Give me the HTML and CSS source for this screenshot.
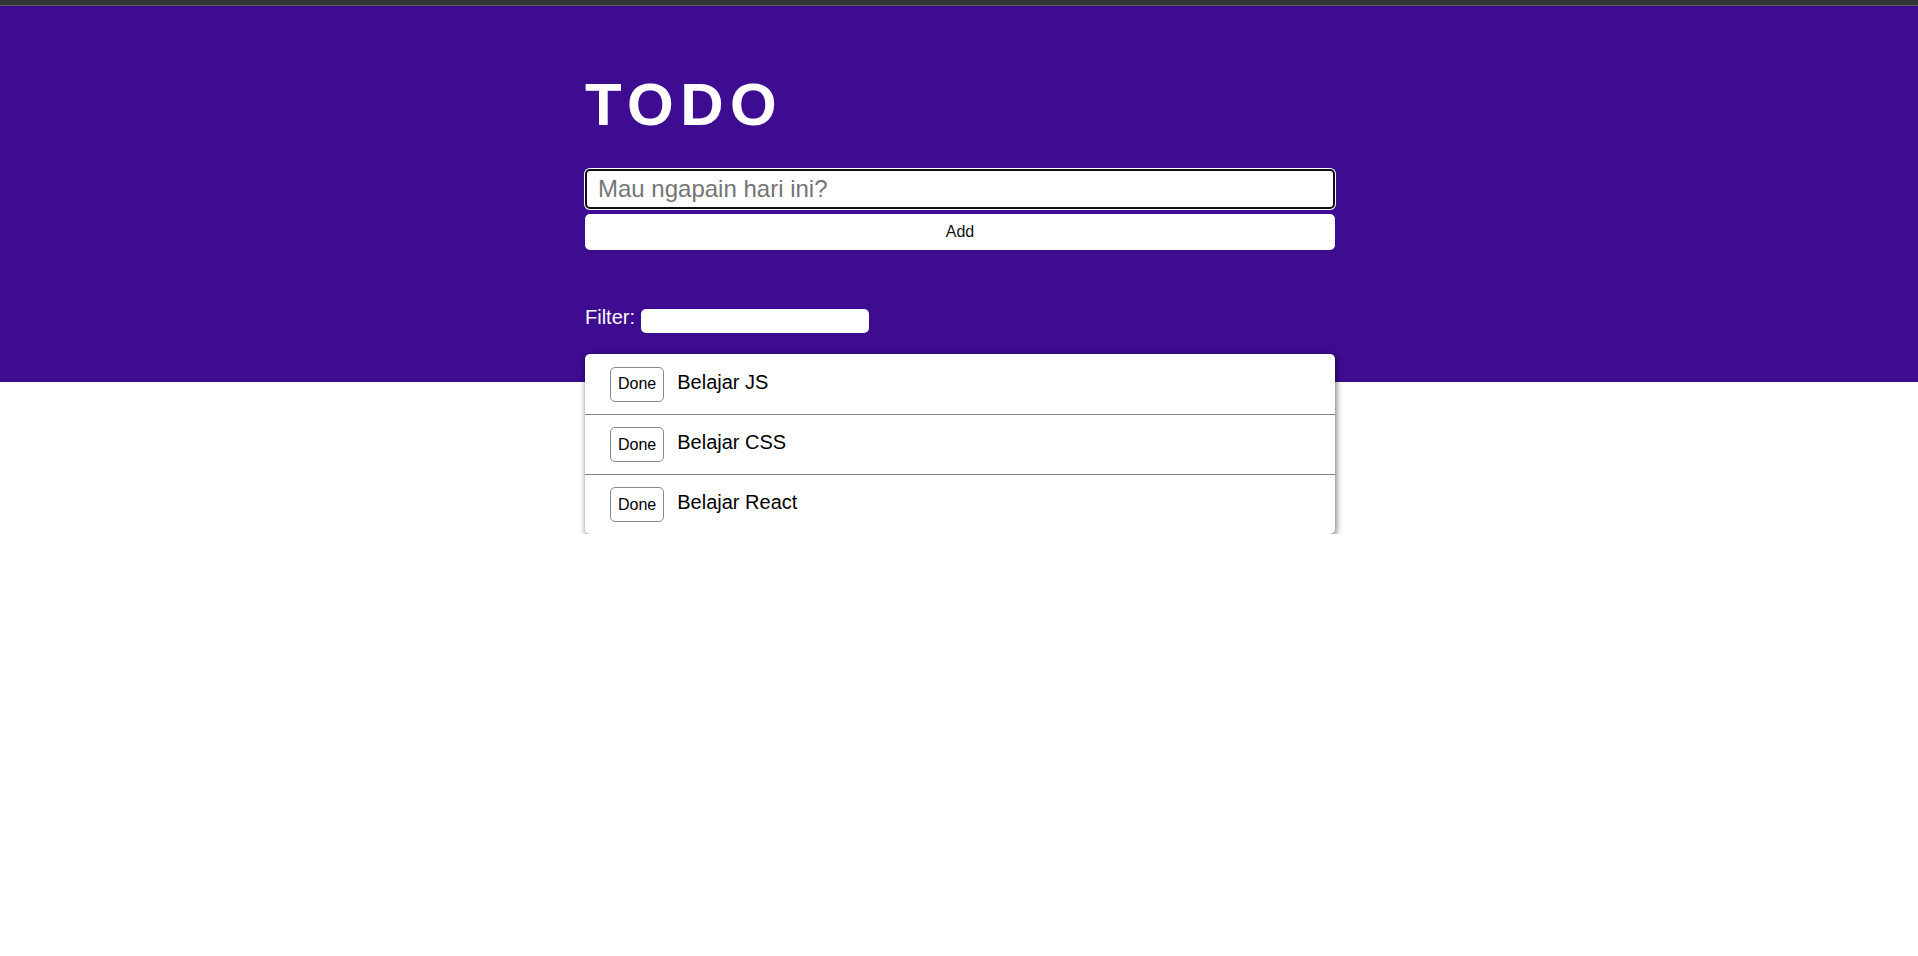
FILE: index.html
```html
<!DOCTYPE html>
<html lang="id">
<head>
<meta charset="utf-8">
<title>TODO</title>
<link rel="stylesheet" href="styles.css">
</head>
<body>
<div class="topbar"></div>
<header class="hero">
  <div class="container">
    <h1 class="title">TODO</h1>
    <form class="add-form">
      <input class="new-todo" type="text" placeholder="Mau ngapain hari ini?" autofocus>
      <button class="add-btn" type="button">Add</button>
    </form>
    <div class="filter">
      <label class="filter-label" for="filter">Filter:</label>
      <input class="filter-input" id="filter" type="text">
    </div>
  </div>
</header>
<main class="container list-wrap">
  <ul class="todo-list">
    <li class="todo-item"><button class="done-btn" type="button">Done</button><span class="todo-text">Belajar JS</span></li>
    <li class="todo-item"><button class="done-btn" type="button">Done</button><span class="todo-text">Belajar CSS</span></li>
    <li class="todo-item"><button class="done-btn" type="button">Done</button><span class="todo-text">Belajar React</span></li>
  </ul>
</main>
</body>
</html>
```
FILE: styles.css
```css
* {
  box-sizing: border-box;
}

html, body {
  margin: 0;
  padding: 0;
  background: #ffffff;
  font-family: "Liberation Sans", Arial, sans-serif;
  color: #000;
}

.topbar {
  height: 6px;
  background: #35363a;
  border-bottom: 1px solid #5b5c5f;
}

.hero {
  background: #3d0c91;
  padding: 64px 0 49px;
}

.container {
  width: 750px;
  margin-left: calc(50% - 374px);
  margin-right: auto;
}

.title {
  margin: 0;
  color: #fff;
  font-size: 60px;
  line-height: 69px;
  font-weight: 700;
  letter-spacing: 6.5px;
}

.add-form {
  margin: 30px 0 0;
  display: flex;
  flex-direction: column;
  gap: 5px;
}

.new-todo {
  display: block;
  width: 100%;
  height: 40px;
  padding: 0 11px;
  border: 2px solid #101010;
  border-radius: 5px;
  box-shadow: 0 0 0 1px #ffffff;
  background: #fff;
  font-family: "Liberation Sans", Arial, sans-serif;
  font-size: 24px;
  color: #000;
  outline: none;
  caret-color: #000;
}

.new-todo::placeholder {
  color: #757575;
}

.add-btn {
  display: block;
  width: 100%;
  height: 36px;
  border: none;
  border-radius: 5px;
  background: #fff;
  font-family: "Liberation Sans", Arial, sans-serif;
  font-size: 16px;
  color: #111;
  padding: 0;
}

.filter {
  margin-top: 56px;
  display: flex;
  align-items: flex-start;
  color: #fff;
  font-size: 20px;
  line-height: 23px;
}

.filter-label {
  margin-right: 6px;
}

.filter-input {
  margin-top: 3px;
  width: 228px;
  height: 24px;
  border: none;
  border-radius: 5px;
  background: #fff;
  padding: 0 6px;
  outline: none;
}

.list-wrap {
  margin-top: -28px;
}

.todo-list {
  list-style: none;
  margin: 0;
  padding: 0;
  background: #fff;
  border-radius: 5px;
  box-shadow: 1px 2px 6px rgba(0, 0, 0, 0.6);
}

.todo-item {
  display: flex;
  align-items: center;
  gap: 13px;
  height: 60px;
  padding: 0 25px;
}

.todo-item + .todo-item {
  border-top: 1px solid #808080;
}

.todo-item:last-child {
  height: 60px;
}

.done-btn {
  height: 35px;
  padding: 0 7px;
  border: 1px solid #8a8a8a;
  border-radius: 5px;
  background: #fff;
  font-family: "Liberation Sans", Arial, sans-serif;
  font-size: 16px;
  color: #000;
}

.todo-text {
  font-size: 20px;
  line-height: 23px;
  margin-bottom: 4px;
  color: #000;
}
```
